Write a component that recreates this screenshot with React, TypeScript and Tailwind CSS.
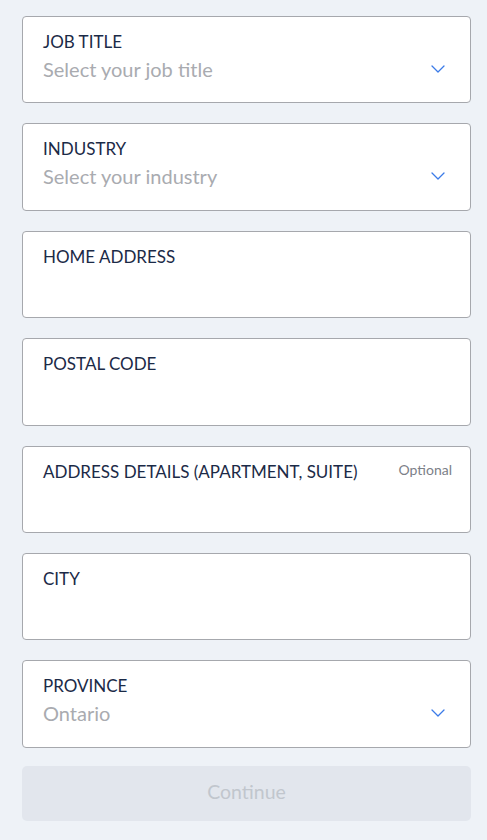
import { ChevronDown } from 'lucide-react';

type Field = {
  label: string;
  placeholder?: string;
  select?: boolean;
  optional?: boolean;
};

const fields: Field[] = [
  { label: 'JOB TITLE', placeholder: 'Select your job title', select: true },
  { label: 'INDUSTRY', placeholder: 'Select your industry', select: true },
  { label: 'HOME ADDRESS' },
  { label: 'POSTAL CODE' },
  { label: 'ADDRESS DETAILS (APARTMENT, SUITE)', optional: true },
  { label: 'CITY' },
  { label: 'PROVINCE', placeholder: 'Ontario', select: true },
];

const App = () => {
  return (
    <div className="min-h-screen bg-[#eef2f7] pl-[22px] pr-4 pt-4 pb-5 font-['Lato',sans-serif]">
      <div className="flex flex-col gap-5">
        {fields.map((field) => (
          <div
            key={field.label}
            className="h-[87.4px] rounded-[4px] border border-[#a6a8ad] bg-white pl-5 pr-5 pt-[15px]"
          >
            {/* Label */}
            <div className="flex items-center justify-between">
              <span className="text-[17px] leading-5 text-[#1b2a47]">{field.label}</span>
              {field.optional && (
                <span className="-mr-[2px] -mt-[3px] text-[14px] leading-5 text-[#7c8088]">Optional</span>
              )}
            </div>

            {/* Value */}
            {field.placeholder && (
              <div className="mt-[5px] flex items-center justify-between">
                <span className="text-[20px] leading-6 text-[#a9abb0]">{field.placeholder}</span>
                <ChevronDown className="h-6 w-6 text-[#3b7be8]" strokeWidth={1.3} />
              </div>
            )}
          </div>
        ))}
      </div>

      {/* Continue */}
      <button
        disabled
        className="mt-[18px] block h-[55px] w-full rounded-[5px] bg-[#e2e6ed] pb-1 text-[19.5px] text-[#c1c6cd]"
      >
        Continue
      </button>
    </div>
  );
};

export default App;
